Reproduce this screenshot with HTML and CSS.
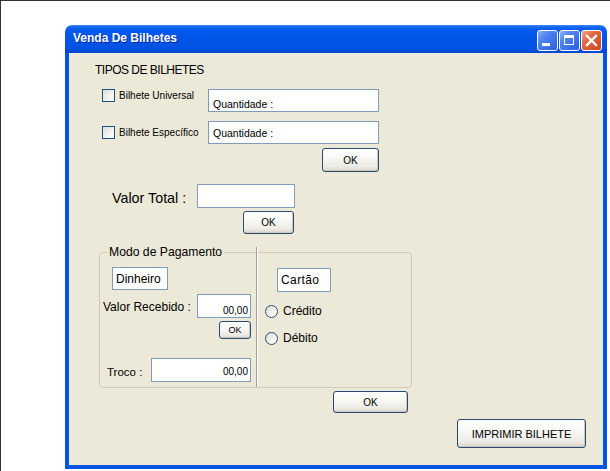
FILE: index.html
```html
<!DOCTYPE html>
<html>
<head>
<meta charset="utf-8">
<link rel="stylesheet" href="styles.css">
</head>
<body>
<div class="screen">
  <div class="window">
    <div class="titlebar">
      <span class="title">Venda De Bilhetes</span>
      <div class="controls">
        <div class="ctl blue"><svg width="19" height="19" viewBox="0 0 19 19"><rect x="4" y="12" width="8" height="3" fill="#fff"/></svg></div>
        <div class="ctl blue"><svg width="19" height="19" viewBox="0 0 19 19"><path d="M4 4h10v10h-10z M5 7v6h8v-6z" fill="#fff" fill-rule="evenodd"/></svg></div>
        <div class="ctl red"><svg width="19" height="19" viewBox="0 0 19 19"><path d="M5 5L14 14M14 5L5 14" stroke="#fff" stroke-width="2.4" stroke-linecap="square"/></svg></div>
      </div>
    </div>
    <div class="client">
      <div class="heading">TIPOS DE BILHETES</div>

      <div class="trow r1">
        <div class="check"><span class="cbox"></span><span class="clbl">Bilhete Universal</span></div>
        <div class="field qty q1">Quantidade :</div>
      </div>
      <div class="trow r2">
        <div class="check"><span class="cbox"></span><span class="clbl">Bilhete Específico</span></div>
        <div class="field qty q2">Quantidade :</div>
      </div>
      <div class="btn ok1">OK</div>

      <div class="total-row">
        <span class="total-lbl">Valor Total :</span>
        <div class="field total-field"></div>
      </div>
      <div class="btn ok2">OK</div>

      <div class="group">
        <span class="legend">Modo de Pagamento</span>
        <span class="divider"></span>
        <div class="gcol left">
          <div class="tag dinheiro">Dinheiro</div>
          <div class="vr-row">
            <span class="vr-lbl">Valor Recebido :</span>
            <div class="field num vr-field">00,00</div>
          </div>
          <div class="btn ok-small">OK</div>
          <div class="troco-row">
            <span class="troco-lbl">Troco :</span>
            <div class="field num troco-field">00,00</div>
          </div>
        </div>
        <div class="gcol right">
          <div class="tag cartao">Cartão</div>
          <div class="radio r-cred"><span class="rcircle"></span><span class="rlbl">Crédito</span></div>
          <div class="radio r-deb"><span class="rcircle"></span><span class="rlbl">Débito</span></div>
        </div>
      </div>

      <div class="btn ok3">OK</div>
      <div class="btn print">IMPRIMIR BILHETE</div>
    </div>
  </div>
</div>
</body>
</html>
```

FILE: styles.css
```css
html, body {
  margin: 0;
  padding: 0;
  background: #fff;
}

.screen {
  width: 610px;
  height: 471px;
  box-sizing: border-box;
  border-top: 1px solid #333;
  border-left: 1px solid #333;
  padding: 24px 0 0 64px;
  overflow: hidden;
  font-family: "Liberation Sans", "DejaVu Sans", sans-serif;
  color: #000;
}

.window {
  width: 542px;
  height: 444px;
  display: flex;
  flex-direction: column;
}

.titlebar {
  height: 28px;
  box-sizing: border-box;
  border-radius: 7px 7px 0 0;
  background: linear-gradient(to bottom, #3A8CFA 0px, #1466F0 2px, #0058EE 6px, #0055E8 50%, #0052E2 85%, #0046CC 100%);
  display: flex;
  align-items: flex-start;
  padding: 0 5px 0 8px;
}

.title {
  margin-top: 6px;
  font-weight: bold;
  font-size: 12px;
  line-height: 14px;
  color: #fff;
  text-shadow: 1px 1px 0 #0A2A9A;
}

.controls {
  margin-left: auto;
  margin-top: 5px;
  display: flex;
  gap: 1px;
}

.ctl {
  width: 21px;
  height: 21px;
  box-sizing: border-box;
  border: 1px solid #fff;
  border-radius: 3px;
  display: flex;
}

.ctl.blue {
  background: linear-gradient(135deg, #8CB0FA 0%, #4F82F0 35%, #2B5FE0 100%);
}

.ctl.red {
  background: linear-gradient(135deg, #F3A58E 0%, #E46A44 35%, #C9441F 100%);
}

.client {
  flex: 1;
  background: #ECE9D8;
  border: 4px solid #0054E3;
  border-top: 0;
  display: flex;
  flex-direction: column;
  align-items: flex-start;
}

.heading {
  margin: 10px 0 0 26px;
  font-size: 12px;
  line-height: 14px;
  letter-spacing: -0.5px;
}

.field {
  box-sizing: border-box;
  background: #fff;
  border: 1px solid #7F9DB9;
}

.trow {
  display: flex;
  align-items: flex-start;
  height: 23px;
  margin-left: 33px;
}

.trow.r1 { margin-top: 12px; }
.trow.r2 { margin-top: 9px; }

.check {
  width: 106px;
  display: flex;
  align-items: center;
}

.r2 .check { margin-top: 5px; }

.cbox {
  width: 13px;
  height: 13px;
  box-sizing: border-box;
  border: 1px solid #1C5180;
  background: linear-gradient(135deg, #DCDCD6 0%, #F4F4F0 60%, #fff 100%);
  flex: none;
}

.clbl {
  margin-left: 4px;
  font-size: 10px;
  line-height: 13px;
  white-space: nowrap;
}

.qty {
  width: 171px;
  height: 23px;
  font-size: 10.5px;
  line-height: 13px;
  padding-left: 4px;
}

.q1 { padding-top: 8px; }
.q2 { padding-top: 5px; }

.btn {
  box-sizing: border-box;
  border: 1px solid #2B4A73;
  border-radius: 3px;
  background: linear-gradient(to bottom, #FFFFFF 0%, #F8F8F4 40%, #ECEBE5 80%, #D8D3C8 100%);
  box-shadow: inset -1px -1px 0 #CEC9BC;
  display: flex;
  align-items: center;
  justify-content: center;
  font-size: 10px;
  color: #000;
}

.ok1 {
  width: 57px;
  height: 24px;
  margin: 4px 0 0 253px;
}

.total-row {
  display: flex;
  align-items: flex-start;
  margin: 12px 0 0 43px;
}

.total-lbl {
  width: 85px;
  margin-top: 6px;
  font-size: 14.3px;
  line-height: 16px;
  white-space: nowrap;
}

.total-field {
  width: 98px;
  height: 24px;
}

.ok2 {
  width: 51px;
  height: 23px;
  margin: 3px 0 0 174px;
}

.group {
  position: relative;
  width: 313px;
  height: 136px;
  margin: 18px 0 0 30px;
  box-sizing: border-box;
  border: 1px solid #CFCBBC;
  border-radius: 4px;
  display: flex;
}

.legend {
  position: absolute;
  top: -8px;
  left: 7px;
  padding: 0 2px;
  background: #ECE9D8;
  font-size: 12.2px;
  line-height: 14px;
  white-space: nowrap;
}

.divider {
  position: absolute;
  left: 156px;
  top: -6px;
  width: 1px;
  height: 140px;
  background: #A4A194;
  box-shadow: 1px 0 0 #fff;
}

.gcol {
  display: flex;
  flex-direction: column;
  align-items: flex-start;
}

.gcol.left { width: 156px; }

.tag {
  box-sizing: border-box;
  background: #fff;
  border: 1px solid #7F9DB9;
  font-size: 12px;
  line-height: 14px;
  padding-left: 3px;
  display: flex;
  align-items: center;
}

.dinheiro {
  width: 56px;
  height: 23px;
  margin: 14px 0 0 12px;
}

.vr-row {
  display: flex;
  align-items: flex-start;
  margin: 4px 0 0 3px;
}

.vr-lbl {
  width: 94px;
  margin-top: 6px;
  font-size: 12px;
  line-height: 14px;
  white-space: nowrap;
}

.num {
  font-size: 10px;
  line-height: 12px;
  text-align: right;
  padding-right: 2px;
}

.vr-field {
  width: 54px;
  height: 24px;
  padding-top: 10px;
}

.ok-small {
  width: 32px;
  height: 18px;
  margin: 3px 0 0 119px;
  font-size: 9px;
}

.troco-row {
  display: flex;
  align-items: flex-start;
  margin: 19px 0 0 7px;
}

.troco-lbl {
  width: 44px;
  margin-top: 7px;
  font-size: 11.5px;
  line-height: 14px;
  white-space: nowrap;
}

.troco-field {
  width: 100px;
  height: 24px;
  padding-top: 7px;
}

.cartao {
  width: 54px;
  height: 24px;
  margin: 15px 0 0 21px;
  letter-spacing: 0.4px;
}

.radio {
  display: flex;
  align-items: center;
  margin-left: 9px;
}

.r-cred { margin-top: 12px; }
.r-deb { margin-top: 13px; }

.rcircle {
  width: 13px;
  height: 13px;
  box-sizing: border-box;
  border: 1px solid #2C4D7C;
  border-radius: 50%;
  background: linear-gradient(135deg, #DCDCD6 0%, #F4F4F0 60%, #fff 100%);
  flex: none;
}

.rlbl {
  margin-left: 5px;
  font-size: 12px;
  line-height: 14px;
}

.ok3 {
  width: 75px;
  height: 22px;
  margin: 3px 0 0 264px;
}

.print {
  width: 129px;
  height: 29px;
  margin: 6px 0 0 388px;
  font-size: 11px;
}
```
